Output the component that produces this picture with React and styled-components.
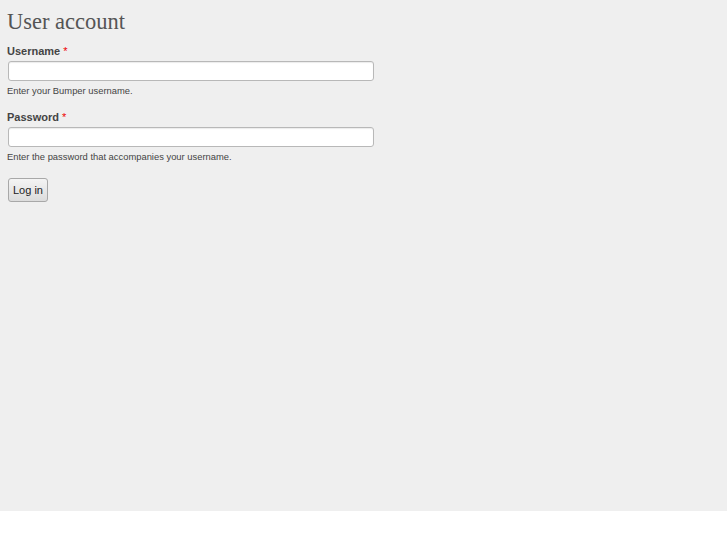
import React from "react";
import styled, { createGlobalStyle } from "styled-components";

const Global = createGlobalStyle`
  html, body { margin: 0; padding: 0; background: #fff; }
`;

const Page = styled.div`
  height: 511px;
  background: #efefef;
  padding: 9px 7px 0;
  box-sizing: border-box;
  font-family: "Liberation Sans", Arial, sans-serif;
`;

const Title = styled.h1`
  margin: 0 0 9px;
  font-family: "Liberation Serif", "Times New Roman", serif;
  font-weight: normal;
  font-size: 22.5px;
  line-height: 26px;
  color: #555;
`;

const Field = styled.div`
  margin-bottom: 13px;
`;

const Label = styled.label`
  display: block;
  font-size: 11px;
  font-weight: bold;
  color: #444;
  line-height: 14px;
  margin-bottom: 3px;
`;

const Req = styled.span`
  color: #e00;
  font-weight: normal;
`;

const Input = styled.input`
  display: block;
  box-sizing: border-box;
  width: 366px;
  height: 20px;
  margin: 0 0 0 1px;
  border: 1px solid #b8b8b8;
  border-radius: 3px;
  background: #fff;
  box-shadow: inset 0 1px 1px rgba(0, 0, 0, 0.08);
`;

const Help = styled.div`
  font-size: 9.4px;
  color: #444;
  margin-top: 4px;
  line-height: 12px;
`;

const Button = styled.button`
  margin: 2px 0 0 1px;
  width: 40px;
  height: 24px;
  padding: 0;
  border: 1px solid #a8a8a8;
  border-radius: 3px;
  background: linear-gradient(#f4f4f4, #dcdcdc);
  font-family: "Liberation Sans", Arial, sans-serif;
  font-size: 11px;
  color: #222;
`;

export default function App() {
  return (
    <>
      <Global />
      <Page>
        <Title>User account</Title>
        <Field>
          <Label>Username <Req>*</Req></Label>
          <Input type="text" />
          <Help>Enter your Bumper username.</Help>
        </Field>
        <Field>
          <Label>Password <Req>*</Req></Label>
          <Input type="password" />
          <Help>Enter the password that accompanies your username.</Help>
        </Field>
        <Button>Log in</Button>
      </Page>
    </>
  );
}
